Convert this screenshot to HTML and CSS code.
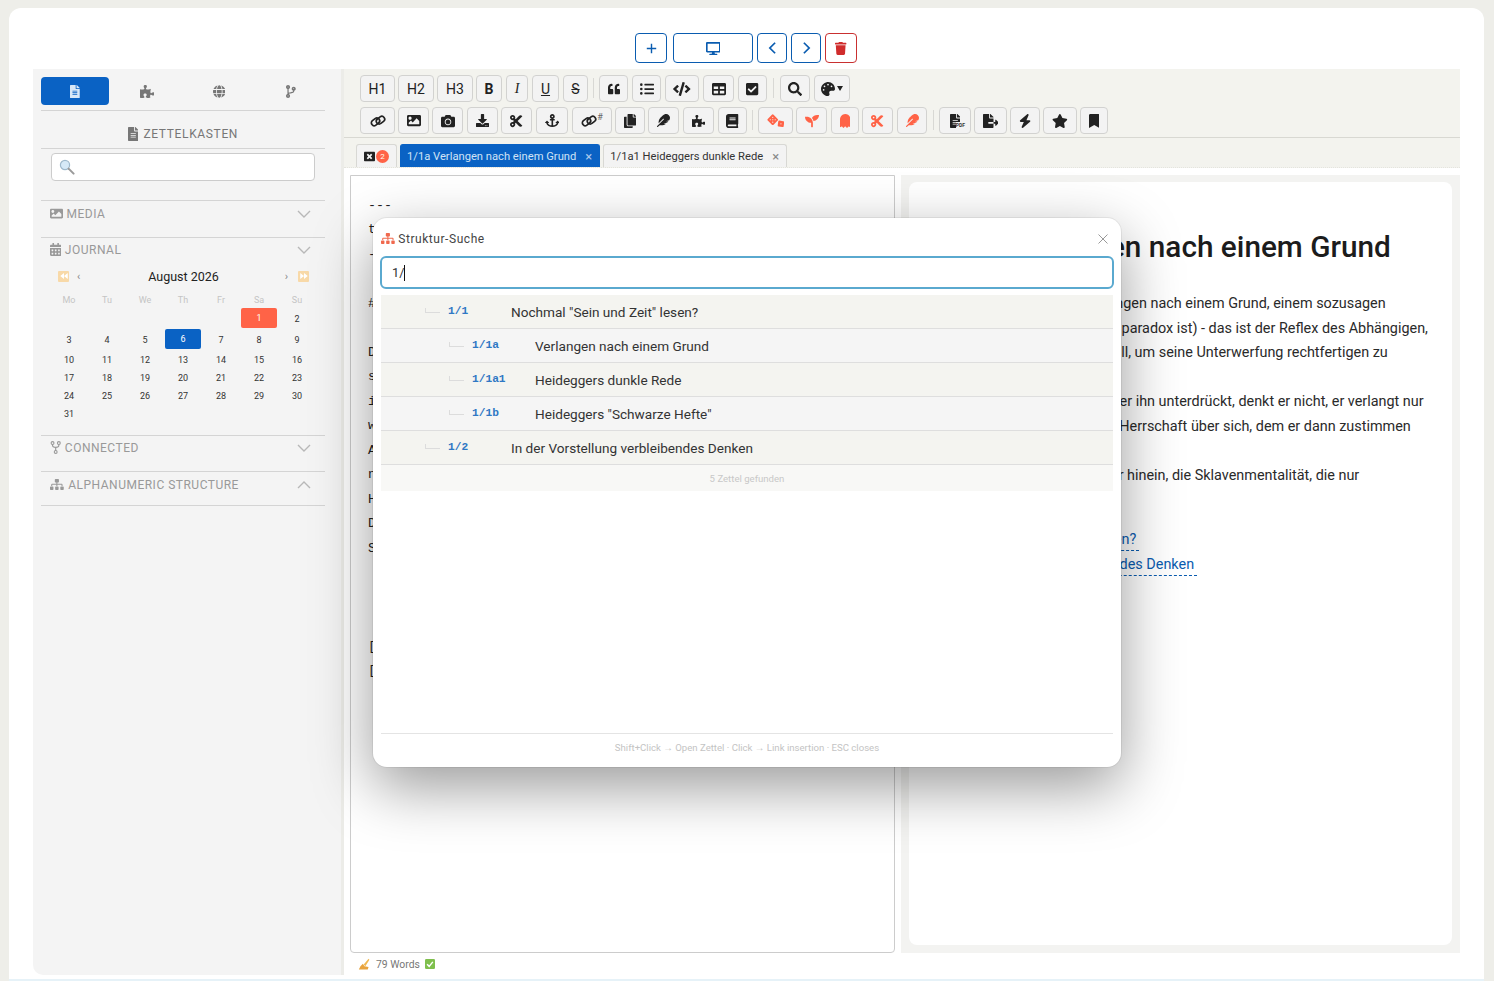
FILE: index.html
```html
<!DOCTYPE html>
<html>
<head>
  <meta charset="UTF-8">
  <meta name="viewport" content="width=device-width, initial-scale=1.0">
  <title>Zettelkasten</title>
  <link rel="stylesheet" href="styles.css">
</head>
<body>
  <svg class="defs" width="0" height="0">
    <defs>
      <path id="file" d="M224 136V0H24C10.7 0 0 10.7 0 24v464c0 13.3 10.7 24 24 24h336c13.3 0 24-10.7 24-24V160H248c-13.2 0-24-10.8-24-24zm64 236c0 6.6-5.4 12-12 12H108c-6.6 0-12-5.4-12-12v-8c0-6.6 5.4-12 12-12h168c6.6 0 12 5.4 12 12v8zm0-64c0 6.6-5.4 12-12 12H108c-6.6 0-12-5.4-12-12v-8c0-6.6 5.4-12 12-12h168c6.6 0 12 5.4 12 12v8zm0-72v8c0 6.6-5.4 12-12 12H108c-6.6 0-12-5.4-12-12v-8c0-6.6 5.4-12 12-12h168c6.6 0 12 5.4 12 12zm96-114.1v6.1H256V0h6.1c6.4 0 12.5 2.5 17 7l97.9 98c4.5 4.5 7 10.6 7 16.9z"/>
      <path id="puzzle" d="M519.442 288.651c-41.519 0-59.5 31.593-82.058 31.593C377.409 320.244 432 144 432 144s-196.288 80-196.288-3.297c0-35.827 36.288-46.25 36.288-85.985C272 19.216 243.885 0 210.539 0c-34.654 0-66.366 18.891-66.366 56.346 0 41.364 31.711 59.277 31.711 81.75C175.885 207.719 0 166.758 0 166.758v333.237s178.635 41.047 178.635-28.662c0-22.473-40-40.107-40-81.471 0-37.456 29.25-56.346 63.577-56.346 33.673 0 61.788 19.216 61.788 54.717 0 39.735-36.288 50.158-36.288 85.985 0 60.803 129.675 25.73 181.23 25.73 0 0-34.725-120.101 25.827-120.101 35.962 0 46.423 36.152 86.308 36.152C556.712 416 576 387.99 576 354.443c0-34.199-18.962-65.792-56.558-65.792z"/>
      <path id="globe" d="M336.5 160C322 70.7 287.8 8 248 8s-74 62.7-88.5 152h177zM152 256c0 22.2 1.2 43.5 3.3 64h185.3c2.1-20.5 3.3-41.8 3.3-64s-1.2-43.5-3.3-64H155.3c-2.1 20.5-3.3 41.8-3.3 64zm324.7-96c-28.6-67.9-86.5-120.4-158-141.6 24.4 33.8 41.2 84.7 50 141.6h108zM177.2 18.4C105.8 39.6 47.8 92.1 19.3 160h108c8.7-56.9 25.5-107.8 49.9-141.6zM487.4 192H372.7c2.1 21 3.3 42.5 3.3 64s-1.2 43-3.3 64h114.6c5.5-20.5 8.6-41.8 8.6-64s-3.1-43.5-8.5-64zM120 256c0-21.5 1.2-43 3.3-64H8.6C3.2 212.5 0 233.8 0 256s3.2 43.5 8.6 64h114.6c-2-21-3.2-42.5-3.2-64zm39.5 96c14.5 89.3 48.7 152 88.5 152s74-62.7 88.5-152h-177zm159.3 141.6c71.4-21.2 129.4-73.7 158-141.6h-108c-8.8 56.9-25.6 107.8-50 141.6zM19.3 352c28.6 67.9 86.5 120.4 158 141.6-24.4-33.8-41.2-84.7-50-141.6h-108z"/>
      <path id="branch" d="M384 144c0-44.2-35.8-80-80-80s-80 35.8-80 80c0 36.4 24.3 67.1 57.5 76.8-.6 16.1-4.2 28.5-11 36.9-15.4 19.2-49.3 22.4-85.2 25.7-28.2 2.6-57.4 5.4-81.3 16.9v-144c32.5-10.2 56-40.5 56-76.3 0-44.2-35.8-80-80-80S0 35.8 0 80c0 35.8 23.5 66.1 56 76.3v199.3C23.5 365.9 0 396.2 0 432c0 44.2 35.8 80 80 80s80-35.8 80-80c0-34-21.2-63.1-51.2-74.6 3.1-5.2 7.8-9.8 14.9-13.4 16.2-8.2 40.4-10.4 66.1-12.8 42.2-3.9 90-8.4 118.2-43.4 14-17.4 21.1-39.8 21.6-67.9 31.6-10.8 54.4-40.7 54.4-75.9zM80 64c8.8 0 16 7.2 16 16s-7.2 16-16 16-16-7.2-16-16 7.2-16 16-16zm0 384c-8.8 0-16-7.2-16-16s7.2-16 16-16 16 7.2 16 16-7.2 16-16 16zm224-320c8.8 0 16 7.2 16 16s-7.2 16-16 16-16-7.2-16-16 7.2-16 16-16z"/>
      <path id="image" d="M464 448H48c-26.51 0-48-21.49-48-48V112c0-26.51 21.49-48 48-48h416c26.51 0 48 21.49 48 48v288c0 26.51-21.49 48-48 48zM112 120c-30.928 0-56 25.072-56 56s25.072 56 56 56 56-25.072 56-56-25.072-56-56-56zM64 384h384V272l-87.515-87.515c-4.686-4.686-12.284-4.686-16.971 0L208 320l-55.515-55.515c-4.686-4.686-12.284-4.686-16.971 0L64 336v48z"/>
      <path id="calendar" d="M0 464c0 26.5 21.5 48 48 48h352c26.5 0 48-21.5 48-48V192H0v272zm320-196c0-6.6 5.4-12 12-12h40c6.6 0 12 5.4 12 12v40c0 6.6-5.4 12-12 12h-40c-6.6 0-12-5.4-12-12v-40zm0 128c0-6.6 5.4-12 12-12h40c6.6 0 12 5.4 12 12v40c0 6.6-5.4 12-12 12h-40c-6.6 0-12-5.4-12-12v-40zM192 268c0-6.6 5.4-12 12-12h40c6.6 0 12 5.4 12 12v40c0 6.6-5.4 12-12 12h-40c-6.6 0-12-5.4-12-12v-40zm0 128c0-6.6 5.4-12 12-12h40c6.6 0 12 5.4 12 12v40c0 6.6-5.4 12-12 12h-40c-6.6 0-12-5.4-12-12v-40zM64 268c0-6.6 5.4-12 12-12h40c6.6 0 12 5.4 12 12v40c0 6.6-5.4 12-12 12H76c-6.6 0-12-5.4-12-12v-40zm0 128c0-6.6 5.4-12 12-12h40c6.6 0 12 5.4 12 12v40c0 6.6-5.4 12-12 12H76c-6.6 0-12-5.4-12-12v-40zM400 64h-48V16c0-8.8-7.2-16-16-16h-32c-8.8 0-16 7.2-16 16v48H160V16c0-8.8-7.2-16-16-16h-32c-8.8 0-16 7.2-16 16v48H48C21.5 64 0 85.5 0 112v48h448v-48c0-26.5-21.5-48-48-48z"/>
      <path id="sitemap" d="M128 352H32c-17.67 0-32 14.33-32 32v96c0 17.67 14.33 32 32 32h96c17.67 0 32-14.33 32-32v-96c0-17.67-14.33-32-32-32zm-24-80h192v48h48v-48h192v48h48v-57.59c0-21.17-17.23-38.41-38.41-38.41H344v-64h40c17.67 0 32-14.33 32-32V32c0-17.67-14.33-32-32-32H256c-17.67 0-32 14.33-32 32v96c0 17.67 14.33 32 32 32h40v64H94.41C73.23 224 56 241.23 56 262.41V320h48v-48zm264 80h-96c-17.67 0-32 14.33-32 32v96c0 17.67 14.33 32 32 32h96c17.67 0 32-14.33 32-32v-96c0-17.67-14.33-32-32-32zm240 0h-96c-17.67 0-32 14.33-32 32v96c0 17.67 14.33 32 32 32h96c17.67 0 32-14.33 32-32v-96c0-17.67-14.33-32-32-32z"/>
      <path id="desktop" d="M528 0H48C21.5 0 0 21.5 0 48v320c0 26.5 21.5 48 48 48h192l-16 48h-72c-13.3 0-24 10.7-24 24s10.7 24 24 24h272c13.3 0 24-10.7 24-24s-10.7-24-24-24h-72l-16-48h192c26.5 0 48-21.5 48-48V48c0-26.5-21.5-48-48-48zm-16 352H64V64h448v288z"/>
      <path id="trash" d="M432 32H312l-9.4-18.7A24 24 0 0 0 281.1 0H166.8a23.72 23.72 0 0 0-21.4 13.3L136 32H16A16 16 0 0 0 0 48v32a16 16 0 0 0 16 16h416a16 16 0 0 0 16-16V48a16 16 0 0 0-16-16zM53.2 467a48 48 0 0 0 47.9 45h245.8a48 48 0 0 0 47.9-45L416 128H32z"/>
      <path id="quote" d="M464 256h-80v-64c0-35.3 28.7-64 64-64h8c13.3 0 24-10.7 24-24V56c0-13.3-10.7-24-24-24h-8c-88.4 0-160 71.6-160 160v240c0 26.5 21.5 48 48 48h128c26.5 0 48-21.5 48-48V304c0-26.5-21.5-48-48-48zm-288 0H96v-64c0-35.3 28.7-64 64-64h8c13.3 0 24-10.7 24-24V56c0-13.3-10.7-24-24-24h-8C71.6 32 0 103.6 0 192v240c0 26.5 21.5 48 48 48h128c26.5 0 48-21.5 48-48V304c0-26.5-21.5-48-48-48z"/>
      <path id="list" d="M48 48a48 48 0 1 0 48 48 48 48 0 0 0-48-48zm0 160a48 48 0 1 0 48 48 48 48 0 0 0-48-48zm0 160a48 48 0 1 0 48 48 48 48 0 0 0-48-48zm448 16H176a16 16 0 0 0-16 16v32a16 16 0 0 0 16 16h320a16 16 0 0 0 16-16v-32a16 16 0 0 0-16-16zm0-320H176a16 16 0 0 0-16 16v32a16 16 0 0 0 16 16h320a16 16 0 0 0 16-16V80a16 16 0 0 0-16-16zm0 160H176a16 16 0 0 0-16 16v32a16 16 0 0 0 16 16h320a16 16 0 0 0 16-16v-32a16 16 0 0 0-16-16z"/>
      <path id="code" d="M278.9 511.5l-61-17.7c-6.4-1.8-10-8.5-8.2-14.9L346.2 8.7c1.8-6.4 8.5-10.1 14.9-8.2l61 17.7c6.4 1.8 10 8.5 8.2 14.9L293.8 503.3c-1.9 6.4-8.5 10.1-14.9 8.2zm-114-112.2l43.5-46.4c4.6-4.9 4.3-12.7-.8-17.2L117 256l90.6-79.7c5.1-4.5 5.5-12.3.8-17.2l-43.5-46.4c-4.5-4.8-12.1-5.1-17-.5L3.8 247.2c-5.1 4.7-5.1 12.8 0 17.5l144.1 135.1c4.9 4.6 12.5 4.4 17-.5zm327.2.6l144.1-135.1c5.1-4.7 5.1-12.8 0-17.5L492.1 112.1c-4.8-4.5-12.4-4.3-17 .5L431.6 159c-4.6 4.9-4.3 12.7.8 17.2L523 256l-90.6 79.7c-5.1 4.5-5.5 12.3-.8 17.2l43.5 46.4c4.5 4.9 12.1 5.1 17 .6z"/>
      <path id="table" d="M464 32H48C21.49 32 0 53.49 0 80v352c0 26.51 21.49 48 48 48h416c26.51 0 48-21.49 48-48V80c0-26.51-21.49-48-48-48zM224 416H64v-96h160v96zm0-160H64v-96h160v96zm224 160H288v-96h160v96zm0-160H288v-96h160v96z"/>
      <path id="check" d="M400 480H48c-26.51 0-48-21.49-48-48V80c0-26.51 21.49-48 48-48h352c26.51 0 48 21.49 48 48v352c0 26.51-21.49 48-48 48zm-204.686-98.059l184-184c6.248-6.248 6.248-16.379 0-22.627l-22.627-22.627c-6.248-6.248-16.379-6.249-22.628 0L184 302.745l-69.059-69.059c-6.248-6.248-16.379-6.248-22.627 0L69.686 256.313c-6.248 6.248-6.248 16.379 0 22.627l104 104c6.249 6.25 16.379 6.25 22.628.001z"/>
      <path id="search" d="M505 442.7L405.3 343c-4.5-4.5-10.6-7-17-7H372c27.6-35.3 44-79.7 44-128C416 93.1 322.9 0 208 0S0 93.1 0 208s93.1 208 208 208c48.3 0 92.7-16.4 128-44v16.3c0 6.4 2.5 12.5 7 17l99.7 99.7c9.4 9.4 24.6 9.4 33.9 0l28.3-28.3c9.4-9.4 9.4-24.6.1-34zM208 336c-70.7 0-128-57.2-128-128 0-70.7 57.2-128 128-128 70.7 0 128 57.2 128 128 0 70.7-57.2 128-128 128z"/>
      <path id="palette" d="M204.3 5C104.9 24.4 24.8 104.3 5.2 203.4c-37 187 131.7 326.4 258.8 306.7 41.2-6.4 61.4-54.6 42.5-91.7-23.1-45.4 9.9-98.4 60.9-98.4h79.7c35.8 0 64.8-29.6 64.9-65.3C511.5 97.1 368.1-26.9 204.3 5zM96 320c-17.7 0-32-14.3-32-32s14.3-32 32-32 32 14.3 32 32-14.3 32-32 32zm32-128c-17.7 0-32-14.3-32-32s14.3-32 32-32 32 14.3 32 32-14.3 32-32 32zm128-64c-17.7 0-32-14.3-32-32s14.3-32 32-32 32 14.3 32 32-14.3 32-32 32zm128 64c-17.7 0-32-14.3-32-32s14.3-32 32-32 32 14.3 32 32-14.3 32-32 32z"/>
      <g id="chain" fill="none" stroke="currentColor" stroke-width="1.7">
        <rect x="1" y="6" width="9" height="5.6" rx="2.8" transform="rotate(-38 5.5 8.8)"/>
        <rect x="6" y="4.4" width="9" height="5.6" rx="2.8" transform="rotate(-38 10.5 7.2)"/>
      </g>
      <path id="camera" d="M512 144v288c0 26.5-21.5 48-48 48H48c-26.5 0-48-21.5-48-48V144c0-26.5 21.5-48 48-48h88l12.3-32.9c7-18.7 24.9-31.1 44.9-31.1h125.5c20 0 37.9 12.4 44.9 31.1L376 96h88c26.5 0 48 21.5 48 48zM376 288c0-66.2-53.8-120-120-120s-120 53.8-120 120 53.8 120 120 120 120-53.8 120-120zm-32 0c0 48.5-39.5 88-88 88s-88-39.5-88-88 39.5-88 88-88 88 39.5 88 88z"/>
      <path id="download" d="M216 0h80c13.3 0 24 10.7 24 24v168h87.7c17.8 0 26.7 21.5 14.1 34.1L269.7 378.3c-7.5 7.5-19.8 7.5-27.3 0L90.1 226.1c-12.6-12.6-3.7-34.1 14.1-34.1H192V24c0-13.3 10.7-24 24-24zm296 376v112c0 13.3-10.7 24-24 24H24c-13.3 0-24-10.7-24-24V376c0-13.3 10.7-24 24-24h146.7l49 49c20.1 20.1 52.5 20.1 72.6 0l49-49H488c13.3 0 24 10.7 24 24zm-124 88c0-11-9-20-20-20s-20 9-20 20 9 20 20 20 20-9 20-20zm64 0c0-11-9-20-20-20s-20 9-20 20 9 20 20 20 20-9 20-20z"/>
      <path id="cut" d="M278.06 256L444.48 89.57c4.69-4.69 4.69-12.29 0-16.97-32.8-32.8-85.99-32.8-118.79 0L210.18 188.12l-24.86-24.86c4.31-10.92 6.68-22.81 6.68-35.26 0-53.02-42.98-96-96-96S0 74.98 0 128s42.98 96 96 96c4.54 0 8.99-.32 13.36-.93L142.29 256l-32.93 32.93c-4.37-.61-8.83-.93-13.36-.93-53.02 0-96 42.98-96 96s42.98 96 96 96 96-42.98 96-96c0-12.45-2.37-24.34-6.68-35.26l24.86-24.86L325.69 439.4c32.8 32.8 85.99 32.8 118.79 0 4.69-4.68 4.69-12.28 0-16.97L278.06 256zM96 160c-17.64 0-32-14.36-32-32s14.36-32 32-32 32 14.36 32 32-14.36 32-32 32zm0 256c-17.64 0-32-14.36-32-32s14.36-32 32-32 32 14.36 32 32-14.36 32-32 32z"/>
      <path id="anchor" d="M12.971 352h32.394C67.172 454.735 181.944 512 288 512c106.229 0 220.853-57.38 242.635-160h32.394c10.691 0 16.045-12.926 8.485-20.485l-67.029-67.029c-4.686-4.686-12.284-4.686-16.971 0l-67.029 67.029c-7.56 7.56-2.206 20.485 8.485 20.485h35.146c-20.29 54.317-84.963 86.588-144.117 94.015V256h52c6.627 0 12-5.373 12-12v-40c0-6.627-5.373-12-12-12h-52v-5.47c37.281-13.178 63.995-48.725 64-90.518C384.005 43.772 341.605.738 289.37.01 235.723-.739 192 42.525 192 96c0 41.798 26.716 77.35 64 90.53V192h-52c-6.627 0-12 5.373-12 12v40c0 6.627 5.373 12 12 12h52v190.015c-58.936-7.399-123.82-39.679-144.117-94.015h35.146c10.691 0 16.045-12.926 8.485-20.485l-67.029-67.029c-4.686-4.686-12.284-4.686-16.971 0L4.485 331.515C-3.074 339.074 2.28 352 12.971 352zM288 64c17.645 0 32 14.355 32 32s-14.355 32-32 32-32-14.355-32-32 14.355-32 32-32z"/>
      <path id="copy" d="M320 448v40c0 13.255-10.745 24-24 24H24c-13.255 0-24-10.745-24-24V120c0-13.255 10.745-24 24-24h72v296c0 30.879 25.121 56 56 56h168zm0-344V0H152c-13.255 0-24 10.745-24 24v368c0 13.255 10.745 24 24 24h272c13.255 0 24-10.745 24-24V128H344c-13.2 0-24-10.8-24-24zm120.971-31.029L375.029 7.029A24 24 0 0 0 358.059 0H352v96h96v-6.059a24 24 0 0 0-7.029-16.97z"/>
      <path id="feather" d="M467.14 44.84c-62.55-62.48-161.67-64.78-252.28 25.73-78.61 78.52-60.98 60.92-85.75 85.66-60.46 60.39-70.39 150.83-63.64 211.17l178.44-178.25c6.26-6.25 16.4-6.25 22.65 0s6.25 16.38 0 22.63L7.04 471.03c-9.38 9.37-9.38 24.57 0 33.94 9.38 9.37 24.6 9.37 33.98 0l66.1-66.03C159.42 454.65 279 457.11 353.95 384h-98.19l147.57-49.14c49.99-49.93 36.38-36.18 46.31-46.86h-97.78l131.54-43.8c45.44-74.46 34.31-148.84-16.26-199.36z"/>
      <path id="book" d="M448 360V24c0-13.3-10.7-24-24-24H96C43 0 0 43 0 96v320c0 53 43 96 96 96h328c13.3 0 24-10.7 24-24v-16c0-7.5-3.5-14.3-8.9-18.7-4.2-15.4-4.2-59.3 0-74.7 5.4-4.3 8.9-11.1 8.9-18.6zM128 134c0-3.3 2.7-6 6-6h212c3.3 0 6 2.7 6 6v20c0 3.3-2.7 6-6 6H134c-3.3 0-6-2.7-6-6v-20zm0 64c0-3.3 2.7-6 6-6h212c3.3 0 6 2.7 6 6v20c0 3.3-2.7 6-6 6H134c-3.3 0-6-2.7-6-6v-20zm253.4 250H96c-17.7 0-32-14.3-32-32 0-17.6 14.4-32 32-32h285.4c-1.9 17.1-1.9 46.9 0 64z"/>
      <path id="seedling" d="M64 96H0c0 123.7 100.3 224 224 224v144c0 8.8 7.2 16 16 16h32c8.8 0 16-7.2 16-16V320C288 196.3 187.7 96 64 96zm384-64c-84.2 0-157.4 46.5-195.7 115.2 27.7 30.2 48.2 66.9 59 107.6C424 243.1 512 147.9 512 32h-64z"/>
      <path id="ghost" d="M186.1.09C81.01 3.24 0 94.92 0 200.05v263.92c0 14.26 17.23 21.39 27.31 11.31l24.92-18.53c6.66-4.95 16-3.99 21.51 2.21l42.95 48.35c6.25 6.25 16.38 6.25 22.63 0l40.72-45.85c6.37-7.17 17.56-7.17 23.92 0l40.72 45.85c6.25 6.25 16.38 6.25 22.63 0l42.95-48.35c5.51-6.2 14.85-7.16 21.51-2.21l24.92 18.53c10.08 10.08 27.31 2.95 27.31-11.31V192C384 84 294.83-3.17 186.1.09z"/>
      <path id="export" d="M384 121.9c0-6.3-2.5-12.4-7-16.9L279.1 7c-4.5-4.5-10.6-7-17-7H256v128h128zM571 308l-95.7-96.4c-10.1-10.2-27.4-3-27.4 11.3V288h-64v64h64v65.2c0 14.3 17.3 21.4 27.4 11.3L571 332c6.6-6.6 6.6-17.4 0-24zm-379 28v-32c0-8.8 7.2-16 16-16h176V160H248c-13.2 0-24-10.8-24-24V0H24C10.7 0 0 10.7 0 24v464c0 13.3 10.7 24 24 24h336c13.3 0 24-10.7 24-24V352H208c-8.8 0-16-7.2-16-16z"/>
      <path id="bolt" d="M349.4 44.6c5.9-13.7 1.5-29.7-10.6-38.5s-28.6-8-39.9 1.8l-256 224c-10 8.8-13.6 22.9-8.9 35.3S50.7 288 64 288H175.5L98.6 467.4c-5.9 13.7-1.5 29.7 10.6 38.5s28.6 8 39.9-1.8l256-224c10-8.8 13.6-22.9 8.9-35.3s-16.6-20.7-30-20.7H272.5L349.4 44.6z"/>
      <path id="star" d="M259.3 17.8L194 150.2 47.9 171.5c-26.2 3.8-36.7 36.1-17.7 54.6l105.7 103-25 145.5c-4.5 26.3 23.2 46 46.4 33.7L288 439.6l130.7 68.7c23.2 12.2 50.9-7.4 46.4-33.7l-25-145.5 105.7-103c19-18.5 8.5-50.8-17.7-54.6L382 150.2 316.7 17.8c-11.7-23.6-45.6-23.9-57.4 0z"/>
      <path id="bookmark" d="M0 512V48C0 21.49 21.49 0 48 0h288c26.51 0 48 21.49 48 48v464L192 400 0 512z"/>
      <path id="winclose" d="M464 32H48C21.5 32 0 53.5 0 80v352c0 26.5 21.5 48 48 48h416c26.5 0 48-21.5 48-48V80c0-26.5-21.5-48-48-48zm-83.6 290.5c4.8 4.8 4.8 12.6 0 17.4l-40.5 40.5c-4.8 4.8-12.6 4.8-17.4 0L256 313.3l-66.5 67.1c-4.8 4.8-12.6 4.8-17.4 0l-40.5-40.5c-4.8-4.8-4.8-12.6 0-17.4l67.1-66.5-67.1-66.5c-4.8-4.8-4.8-12.6 0-17.4l40.5-40.5c4.8-4.8 12.6-4.8 17.4 0l66.5 67.1 66.5-67.1c4.8-4.8 12.6-4.8 17.4 0l40.5 40.5c4.8 4.8 4.8 12.6 0 17.4L313.3 256l67.1 66.5z"/>
      <g id="dice">
        <rect x="60" y="60" width="300" height="300" rx="44" transform="rotate(45 210 210)"/>
        <rect x="400" y="250" width="220" height="220" rx="40" transform="rotate(8 510 360)"/>
        <g class="pips">
          <circle cx="210" cy="210" r="22"/><circle cx="120" cy="210" r="22"/><circle cx="300" cy="210" r="22"/><circle cx="210" cy="120" r="22"/><circle cx="210" cy="300" r="22"/><circle cx="510" cy="360" r="22"/>
        </g>
      </g>
      <g id="fork">
        <circle cx="100" cy="80" r="56"/><circle cx="348" cy="80" r="56"/><circle cx="224" cy="432" r="56"/>
        <path d="M100 130v50c0 44 36 70 124 70s124-26 124-70v-50M224 250v140"/>
      </g>
    </defs>
  </svg>

  <div class="page">
    <div class="top-bar">
      <button class="top-btn w32"><svg class="plus" viewBox="0 0 14 14"><path d="M7 1v12M1 7h12"/></svg></button>
      <button class="top-btn w80"><svg class="ic" viewBox="0 0 576 512"><use href="#desktop"/></svg></button>
      <button class="top-btn w30 gap-l"><svg class="chev" viewBox="0 0 10 16"><path d="M8 2L2 8l6 6"/></svg></button>
      <button class="top-btn w30 gap-l"><svg class="chev" viewBox="0 0 10 16"><path d="M2 2l6 6-6 6"/></svg></button>
      <button class="top-btn w32 gap-l red"><svg class="ic" viewBox="0 0 448 512"><use href="#trash"/></svg></button>
    </div>

    <div class="app">
      <aside class="sidebar">
        <div class="side-tabs">
          <div class="side-tab active"><svg class="ic" viewBox="0 0 384 512"><use href="#file"/></svg></div>
          <div class="side-tab"><svg class="ic" viewBox="0 0 576 512"><use href="#puzzle"/></svg></div>
          <div class="side-tab"><svg class="ic" viewBox="0 0 496 512"><use href="#globe"/></svg></div>
          <div class="side-tab"><svg class="ic" viewBox="0 0 384 512"><use href="#branch"/></svg></div>
        </div>
        <div class="side-title"><svg class="ic" viewBox="0 0 384 512"><use href="#file"/></svg> ZETTELKASTEN</div>
        <div class="side-search">
          <svg class="lens" viewBox="0 0 16 16">
            <circle cx="6" cy="6" r="4.6" fill="#d6e9f7" stroke="#9fb9cc" stroke-width="1.2"/>
            <path d="M9.6 9.6l5 5" stroke="#9a9a9a" stroke-width="2" stroke-linecap="round"/>
          </svg>
        </div>

        <div class="sec sec-media">
          <span><svg class="ic" viewBox="0 0 512 512"><use href="#image"/></svg> MEDIA</span>
          <svg class="caret" viewBox="0 0 14 8"><path d="M1 1l6 6 6-6"/></svg>
        </div>
        <div class="sec sec-journal">
          <span><svg class="ic" viewBox="0 0 448 512"><use href="#calendar"/></svg> JOURNAL</span>
          <svg class="caret" viewBox="0 0 14 8"><path d="M1 1l6 6 6-6"/></svg>
        </div>

        <div class="cal">
          <div class="cal-head">
            <span class="cal-nav"><i class="ff"><svg viewBox="0 0 10 8"><path d="M5 0L0 4l5 4zM10 0L5 4l5 4z"/></svg></i><b>‹</b></span>
            <span class="cal-month">August 2026</span>
            <span class="cal-nav end"><b>›</b><i class="ff"><svg viewBox="0 0 10 8"><path d="M0 0l5 4-5 4zM5 0l5 4-5 4z"/></svg></i></span>
          </div>
          <div class="cal-grid">
            <span class="wd">Mo</span><span class="wd">Tu</span><span class="wd">We</span><span class="wd">Th</span><span class="wd">Fr</span><span class="wd">Sa</span><span class="wd">Su</span>
            <span></span><span></span><span></span><span></span><span></span><span class="d1">1</span><span>2</span>
            <span>3</span><span>4</span><span>5</span><span class="d6">6</span><span>7</span><span>8</span><span>9</span>
            <span>10</span><span>11</span><span>12</span><span>13</span><span>14</span><span>15</span><span>16</span>
            <span>17</span><span>18</span><span>19</span><span>20</span><span>21</span><span>22</span><span>23</span>
            <span>24</span><span>25</span><span>26</span><span>27</span><span>28</span><span>29</span><span>30</span>
            <span>31</span>
          </div>
        </div>

        <div class="sec sec-conn">
          <span><svg class="ic fork" viewBox="0 0 448 512"><use href="#fork"/></svg> CONNECTED</span>
          <svg class="caret" viewBox="0 0 14 8"><path d="M1 1l6 6 6-6"/></svg>
        </div>
        <div class="sec sec-alpha">
          <span><svg class="ic site" viewBox="0 0 640 512"><use href="#sitemap"/></svg> ALPHANUMERIC STRUCTURE</span>
          <svg class="caret" viewBox="0 0 14 8"><path d="M1 7l6-6 6 6"/></svg>
        </div>
      </aside>

      <main class="main">
        <div class="head">
          <div class="tool-row">
            <button class="tb b35">H1</button>
            <button class="tb b36 tight">H2</button>
            <button class="tb b36 tight">H3</button>
            <button class="tb b26 tight fw">B</button>
            <button class="tb b22 it">I</button>
            <button class="tb b27 un">U</button>
            <button class="tb b25 st">S</button>
            <span class="sep"></span>
            <button class="tb b29"><svg class="ic i12" viewBox="0 0 512 512"><use href="#quote"/></svg></button>
            <button class="tb b29"><svg class="ic" viewBox="0 0 512 512"><use href="#list"/></svg></button>
            <button class="tb b34"><svg class="ic" viewBox="0 0 640 512"><use href="#code"/></svg></button>
            <button class="tb b31"><svg class="ic" viewBox="0 0 512 512"><use href="#table"/></svg></button>
            <button class="tb b29"><svg class="ic" viewBox="0 0 448 512"><use href="#check"/></svg></button>
            <span class="sep wide"></span>
            <button class="tb b30"><svg class="ic" viewBox="0 0 512 512"><use href="#search"/></svg></button>
            <button class="tb b36"><svg class="ic" viewBox="0 0 512 512"><use href="#palette"/></svg><span class="drop"></span></button>
          </div>
          <div class="tool-row">
            <button class="tb b35"><svg class="ic i16" viewBox="0 0 16 16"><use href="#chain"/></svg></button>
            <button class="tb b31 tight"><svg class="img-ic" viewBox="0 0 512 512" preserveAspectRatio="none"><use href="#image"/></svg></button>
            <button class="tb b31 tight"><svg class="ic" viewBox="0 0 512 512"><use href="#camera"/></svg></button>
            <button class="tb b31"><svg class="ic i13" viewBox="0 0 512 512"><use href="#download"/></svg></button>
            <button class="tb b31 tight"><svg class="ic" viewBox="0 0 448 512"><use href="#cut"/></svg></button>
            <button class="tb b32"><svg class="ic i13" viewBox="0 0 576 512"><use href="#anchor"/></svg></button>
            <button class="tb b40"><svg class="ic i16" viewBox="0 0 16 16"><use href="#chain"/></svg><sup class="hash">#</sup></button>
            <button class="tb b30 tight"><svg class="ic" viewBox="0 0 448 512"><use href="#copy"/></svg></button>
            <button class="tb b31 tight"><svg class="ic i13" viewBox="0 0 512 512"><use href="#feather"/></svg></button>
            <button class="tb b31"><svg class="ic i12" viewBox="0 0 576 512"><use href="#puzzle"/></svg></button>
            <button class="tb b29"><svg class="ic" viewBox="0 0 448 512"><use href="#book"/></svg></button>
            <span class="sep"></span>
            <button class="tb b35 hot"><svg class="ic" viewBox="0 0 640 512"><use href="#dice"/></svg></button>
            <button class="tb b31 hot tight"><svg class="ic" viewBox="0 0 512 512"><use href="#seedling"/></svg></button>
            <button class="tb b28 hot"><svg class="ic" viewBox="0 0 384 512"><use href="#ghost"/></svg></button>
            <button class="tb b31 hot tight"><svg class="ic" viewBox="0 0 448 512"><use href="#cut"/></svg></button>
            <button class="tb b30 hot"><svg class="ic i13" viewBox="0 0 512 512"><use href="#feather"/></svg></button>
            <span class="sep wide"></span>
            <button class="tb b32 pdf tight"><svg class="ic" viewBox="0 0 384 512"><use href="#file"/></svg><span class="pdf-tag">PDF</span></button>
            <button class="tb b33 tight"><svg class="ic" viewBox="0 0 576 512"><use href="#export"/></svg></button>
            <button class="tb b30 tight"><svg class="ic" viewBox="0 0 448 512"><use href="#bolt"/></svg></button>
            <button class="tb b34 tight"><svg class="ic" viewBox="0 0 576 512"><use href="#star"/></svg></button>
            <button class="tb b28 tight"><svg class="ic" viewBox="0 0 384 512"><use href="#bookmark"/></svg></button>
          </div>
        </div>

        <div class="tabs">
          <div class="tab closer"><svg class="ic" viewBox="0 0 512 512"><use href="#winclose"/></svg><span class="count">2</span></div>
          <div class="tab current">1/1a Verlangen nach einem Grund<span class="x">×</span></div>
          <div class="tab">1/1a1 Heideggers dunkle Rede<span class="x">×</span></div>
        </div>

        <div class="panes">
          <div class="left-pane">
            <div class="editor">---
title: Verlangen nach einem Grund
---

# Verlangen nach einem Grund

Das Verlangen nach einem Grund, einem
sozusagen ersten Anstoß
ist der Reflex
wer sich unterwirft
Aber wer ihn unterdrückt
nicht denkt
Herrschaft
Das ist
Sklavenmentalität



[[1/1]]
[[1/2]]</div>
            <div class="status">
              <svg class="hand" viewBox="0 0 16 16"><path d="M1 14h11l1-3-5-1-2-3-3 3z" fill="#e8a33d"/><path d="M7 8l6-7 1 1-5 8z" fill="#f0b74f"/></svg>
              79 Words
              <svg class="done" viewBox="0 0 12 12"><rect width="12" height="12" rx="1.5" fill="#7fbf4d"/><path d="M2.5 6.2l2.5 2.6 4.4-5.4" fill="none" stroke="#fff" stroke-width="1.7"/></svg>
            </div>
          </div>
          <div class="right-pane">
            <div class="preview">
              <h1>1/1a Verlangen nach einem Grund</h1>
              <p>Dieses immer größere Verlangen nach einem Grund, einem sozusagen<br>
              ersten Anstoss (was an sich paradox ist) - das ist der Reflex des Abhängigen,<br>
              der nur einen Herrn haben will, um seine Unterwerfung rechtfertigen zu</p>
              <p>Wer etwas sucht, das ihn, oder ihn unterdrückt, denkt er nicht, er verlangt nur<br>
              nach einem Befehl nur einer Herrschaft über sich, dem er dann zustimmen</p>
              <p>Ja legt er sein Denken immer hinein, die Sklavenmentalität, die nur</p>
              <p class="links">
                <a href="#">Nochmal "Sein und Zeit" lesen?</a><br>
                <a href="#">In der Vorstellung verbleibendes Denken</a>
              </p>
            </div>
          </div>
        </div>
      </main>
    </div>
  </div>

  <div class="modal">
    <div class="modal-head">
      <span class="modal-title"><svg class="ic" viewBox="0 0 640 512"><use href="#sitemap"/></svg> Struktur-Suche</span>
      <svg class="modal-x" viewBox="0 0 10 10"><path d="M0.5 0.5l9 9M9.5 0.5l-9 9"/></svg>
    </div>
    <div class="modal-input">1/<span class="cursor"></span></div>
    <div class="results">
      <div class="res lvl1"><span class="tree"></span><span class="code">1/1</span><span class="name">Nochmal "Sein und Zeit" lesen?</span></div>
      <div class="res lvl2"><span class="tree"></span><span class="code">1/1a</span><span class="name">Verlangen nach einem Grund</span></div>
      <div class="res lvl2"><span class="tree"></span><span class="code">1/1a1</span><span class="name">Heideggers dunkle Rede</span></div>
      <div class="res lvl2"><span class="tree"></span><span class="code">1/1b</span><span class="name">Heideggers "Schwarze Hefte"</span></div>
      <div class="res lvl1"><span class="tree"></span><span class="code">1/2</span><span class="name">In der Vorstellung verbleibendes Denken</span></div>
      <div class="res-count">5 Zettel gefunden</div>
    </div>
    <div class="modal-foot">Shift+Click → Open Zettel · Click → Link insertion · ESC closes</div>
  </div>
</body>
</html>
```

FILE: styles.css
```css
* {
  box-sizing: border-box;
}
html, body {
  height: 100%;
}
body {
  margin: 0;
  padding: 8px 10px 0 9px;
  background: #eeeee9;
  font-family: Roboto, "Liberation Sans", sans-serif;
  color: #333;
  overflow: hidden;
  position: relative;
}
.defs {
  position: absolute;
}
.ic {
  height: 14px;
  fill: currentColor;
  display: inline-block;
  vertical-align: -2px;
}
.ic.i16 { height: 16px; }
.ic.i13 { height: 13px; }
.ic.i12 { height: 12px; }
.img-ic {
  width: 14px;
  height: 15px;
  fill: currentColor;
}
.page {
  height: 973px;
  background: #fff;
  border-radius: 12px 12px 0 0;
  border-bottom: 2px solid #e6f2f8;
  padding: 25px 24px 0;
  display: flex;
  flex-direction: column;
}

/* top buttons */
.top-bar {
  display: flex;
  justify-content: center;
  gap: 6px;
  height: 30px;
  margin: 0 0 6px 0;
  padding-right: 1px;
}
.top-btn {
  height: 30px;
  background: #fff;
  border: 1px solid #0a5cb0;
  border-radius: 4px;
  color: #0a5cb0;
  padding: 0;
  display: flex;
  align-items: center;
  justify-content: center;
}
.top-btn .ic {
  height: 13px;
}
.top-btn.red {
  border-color: #c93030;
  color: #d02c2c;
}
.w32 { width: 32px; }
.w80 { width: 80px; }
.w30 { width: 30px; }
.gap-l { margin-left: -2px; }
.plus {
  width: 11px;
  height: 11px;
  fill: none;
  stroke: currentColor;
  stroke-width: 1.8;
}
.chev {
  width: 9px;
  height: 14px;
  fill: none;
  stroke: currentColor;
  stroke-width: 2;
}

.app {
  flex: 1;
  display: flex;
  min-height: 0;
}

/* sidebar */
.sidebar {
  width: 311px;
  height: 906px;
  flex: none;
  background: #f4f4f4;
  border-right: 3px solid #ecece8;
  border-radius: 0 0 0 10px;
  padding: 8px 16px 0 8px;
  color: #999;
}
.side-tabs {
  display: grid;
  grid-template-columns: repeat(4, 1fr);
  gap: 4px;
  padding-bottom: 5px;
  border-bottom: 1px solid #d4d4d4;
}
.side-tab {
  height: 28px;
  display: flex;
  align-items: center;
  justify-content: center;
  color: #777;
  border-radius: 4px;
}
.side-tab .ic {
  height: 13px;
}
.side-tab.active {
  background: #0a62c4;
  color: #d8e8f8;
}
.side-title {
  height: 38px;
  padding-top: 8px;
  display: flex;
  align-items: center;
  justify-content: center;
  gap: 5px;
  font-size: 12px;
  letter-spacing: 0.65px;
  color: #777;
  border-bottom: 1px solid #d4d4d4;
}
.side-title .ic {
  height: 14px;
}
.side-search {
  height: 28px;
  margin: 4px 10px 19px;
  background: #fff;
  border: 1px solid #ccc;
  border-radius: 4px;
  display: flex;
  align-items: center;
  padding-left: 7px;
}
.lens {
  width: 16px;
  height: 16px;
}
.sec {
  display: flex;
  justify-content: space-between;
  border-top: 1px solid #d4d4d4;
  font-size: 12px;
  letter-spacing: 0.5px;
  color: #999;
  padding: 6px 14px 0 9px;
}
.sec .ic {
  height: 13px;
  vertical-align: -2px;
}
.sec .ic.site {
  height: 11px;
  vertical-align: -1px;
  margin-right: 1px;
}
.sec-media { height: 37px; }
.sec-journal {
  height: 31px;
  padding-top: 5px;
}
.sec-conn {
  height: 36px;
  margin-top: 12px;
  padding-top: 5px;
}
.sec-alpha {
  height: 35px;
  border-bottom: 1px solid #d4d4d4;
}
.caret {
  width: 14px;
  height: 8px;
  margin-top: 3px;
  fill: none;
  stroke: #b8b8b8;
  stroke-width: 1.4;
}
.ic.fork {
  height: 13px;
  fill: none;
  stroke: currentColor;
  stroke-width: 44;
}

/* calendar */
.cal {
  padding: 0 5px 0 9px;
}
.cal-head {
  display: grid;
  grid-template-columns: 1fr auto 1fr;
  align-items: center;
  height: 16px;
  padding: 0 11px 0 8px;
  margin-bottom: 8px;
}
.cal-month {
  font-size: 12.5px;
  color: #222;
}
.cal-nav {
  display: flex;
  align-items: center;
  gap: 8px;
}
.cal-nav.end {
  justify-content: flex-end;
  gap: 10px;
}
.cal-nav b {
  font-weight: 400;
  font-size: 11px;
  color: #888;
}
.ff {
  width: 11px;
  height: 11px;
  background: #f8d9a8;
  border-radius: 1px;
  display: flex;
  align-items: center;
  justify-content: center;
}
.ff svg {
  width: 8px;
  height: 6px;
  fill: #fff;
}
.cal-grid {
  display: grid;
  grid-template-columns: repeat(7, 38px);
  grid-template-rows: 16px 21px 21px 19px repeat(3, 18px);
  font-size: 9px;
  color: #333;
  text-align: center;
}
.cal-grid span {
  display: flex;
  align-items: center;
  justify-content: center;
}
.cal-grid .wd {
  color: #c4c4c4;
}
.d1 {
  background: #ff6347;
  color: #ffe;
  border-radius: 2px;
  margin: 0 1px 1px;
}
.d6 {
  background: #0a62c4;
  color: #fff;
  border-radius: 2px;
  margin: 0 1px 1px;
}

/* main column */
.main {
  flex: 1;
  min-width: 0;
  height: 906px;
  display: flex;
  flex-direction: column;
}
.head {
  height: 69px;
  background: #f3f3ee;
  border-bottom: 1px solid #d8d8d2;
  padding: 6px 0 0 16px;
  display: flex;
  flex-direction: column;
  gap: 5px;
}
.tool-row {
  display: flex;
  gap: 4px;
  height: 27px;
}
.tb {
  height: 27px;
  padding: 0;
  border: 1px solid #d2d2d0;
  border-radius: 4px;
  background: #f3f3f3;
  color: #222;
  font: 14px Roboto, sans-serif;
  display: flex;
  align-items: center;
  justify-content: center;
  position: relative;
}
.tb.hot {
  color: #ff6347;
}
.tight { margin-left: -1px; }
.pips { fill: #f3f3f3; }
.b22 { width: 22px; }
.b25 { width: 25px; }
.b26 { width: 26px; }
.b27 { width: 27px; }
.b28 { width: 28px; }
.b29 { width: 29px; }
.b30 { width: 30px; }
.b31 { width: 31px; }
.b32 { width: 32px; }
.b33 { width: 33px; }
.b34 { width: 34px; }
.b35 { width: 35px; }
.b36 { width: 36px; }
.b40 { width: 40px; }
.fw { font-weight: 700; }
.it { font-family: "Liberation Serif", serif; font-style: italic; }
.un { text-decoration: underline; }
.st { text-decoration: line-through; }
.sep {
  width: 1px;
  height: 20px;
  background: #d8d8d4;
  margin: 3px 1px 0;
}
.sep.wide {
  margin: 3px 2px 0;
}
.drop {
  width: 0;
  height: 0;
  margin-left: 2px;
  border-left: 3.5px solid transparent;
  border-right: 3.5px solid transparent;
  border-top: 5px solid #222;
}
.hash {
  font-size: 9px;
  color: #666;
  line-height: 1;
  margin-top: -6px;
}
.pdf-tag {
  position: absolute;
  right: 5px;
  bottom: 5px;
  font-size: 5px;
  font-weight: 700;
  color: #333;
  background: #f3f3f3;
  line-height: 6px;
}

/* tabs */
.tabs {
  height: 30px;
  background: #f3f3ee;
  border-bottom: 1px dotted #e4e4de;
  padding: 6px 0 0 12px;
  display: flex;
  gap: 3px;
}
.tab {
  height: 23px;
  border: 1px solid #d8d8d4;
  border-bottom: 0;
  border-radius: 3px 3px 0 0;
  font-size: 11.2px;
  color: #333;
  padding: 0 7px 0 6px;
  display: flex;
  align-items: center;
  background: #f3f3f3;
}
.tab .x {
  font-size: 13px;
  color: #888;
  margin-left: 9px;
}
.tab.current {
  background: #0a62c4;
  border-color: #0a62c4;
  color: #cfe2f6;
}
.tab.current .x {
  color: #a9c9ec;
}
.closer {
  width: 41px;
  padding: 0 7px;
  gap: 1px;
}
.closer .ic {
  height: 11px;
  color: #222;
}
.count {
  width: 13px;
  height: 13px;
  border-radius: 50%;
  background: #ff6347;
  color: #ffe;
  font-size: 8px;
  display: flex;
  align-items: center;
  justify-content: center;
}

/* panes */
.panes {
  flex: 1;
  display: flex;
  padding: 7px 0 0 6px;
  gap: 6px;
  min-height: 0;
}
.left-pane {
  width: 545px;
  flex: none;
  display: flex;
  flex-direction: column;
}
.editor {
  height: 778px;
  border: 1px solid #ccc;
  border-radius: 0 0 4px 4px;
  padding: 17.5px 17px;
  font: 13.33px/24.5px "Liberation Mono", monospace;
  color: #222;
  white-space: pre;
  overflow: hidden;
}
.status {
  display: flex;
  align-items: center;
  gap: 5px;
  height: 22px;
  padding-left: 8px;
  font-size: 10.4px;
  color: #777;
}
.hand {
  width: 13px;
  height: 13px;
}
.done {
  width: 10px;
  height: 10px;
}
.right-pane {
  flex: 1;
  min-width: 0;
  height: 778px;
  background: #f3f3f1;
  padding: 7px 8px 8px;
}
.preview {
  height: 100%;
  background: #fff;
  border-radius: 8px;
  padding: 47px 24px 0 29px;
  font-size: 14.4px;
  line-height: 24.5px;
  color: #2a2a2a;
  white-space: nowrap;
  overflow: hidden;
}
.preview h1 {
  font-size: 29.76px;
  font-weight: 500;
  line-height: 36px;
  margin: 0 0 27px;
  color: #1c1c1c;
}
.preview p {
  margin: 0 0 24.5px;
}
.preview .links {
  margin-top: 40px;
}
.preview a {
  color: #0a5cb0;
  text-decoration: none;
  border-bottom: 1px dashed #0a5cb0;
  padding: 0 3px 2px 0;
}

/* search modal */
.modal {
  position: absolute;
  left: 373px;
  top: 218px;
  width: 748px;
  height: 549px;
  background: #fff;
  border-radius: 14px;
  box-shadow: 0 0 0 1px rgba(0, 0, 0, 0.06), 0 20px 60px rgba(0, 0, 0, 0.4);
  padding: 0 8px;
  display: flex;
  flex-direction: column;
}
.modal-head {
  height: 38px;
  padding: 4px 5px 0 0;
  display: flex;
  justify-content: space-between;
  align-items: center;
}
.modal-title {
  font-size: 12px;
  letter-spacing: 0.55px;
  color: #444;
}
.modal-title .ic {
  height: 11px;
  color: #f0694e;
  vertical-align: -1px;
}
.modal-x {
  width: 10px;
  height: 10px;
  fill: none;
  stroke: #999;
  stroke-width: 1;
}
.modal-input {
  height: 33px;
  margin-left: -1px;
  margin-right: -1px;
  border: 2px solid #5aa9cf;
  border-radius: 6px;
  padding-left: 10px;
  font-size: 12.8px;
  color: #333;
  display: flex;
  align-items: center;
}
.cursor {
  width: 1px;
  height: 16px;
  background: #111;
}
.results {
  margin-top: 6px;
  flex: 1;
}
.res {
  height: 34px;
  padding-top: 1px;
  display: flex;
  align-items: center;
  background: #f4f4f0;
  border-bottom: 1px solid #dedede;
  font-size: 13.6px;
  color: #333;
}
.res:nth-child(even) {
  background: #f5f5f5;
}
.tree {
  width: 15px;
  height: 5px;
  border-left: 1px solid #dcdcdc;
  border-bottom: 1px solid #dcdcdc;
  margin-right: 8px;
  margin-top: -4px;
}
.lvl1 .tree { margin-left: 44px; }
.lvl2 .tree { margin-left: 68px; }
.code {
  width: 63px;
  font: 700 11.2px "Liberation Mono", monospace;
  color: #2f78c4;
  margin-top: -3px;
}
.res-count {
  height: 26px;
  background: #f8f8f6;
  font-size: 9.6px;
  color: #c8c8c8;
  display: flex;
  align-items: center;
  justify-content: center;
}
.modal-foot {
  height: 34px;
  padding-bottom: 6px;
  border-top: 1px solid #e4e4e4;
  font-size: 9.6px;
  color: #c4c4c4;
  display: flex;
  align-items: center;
  justify-content: center;
}
```
